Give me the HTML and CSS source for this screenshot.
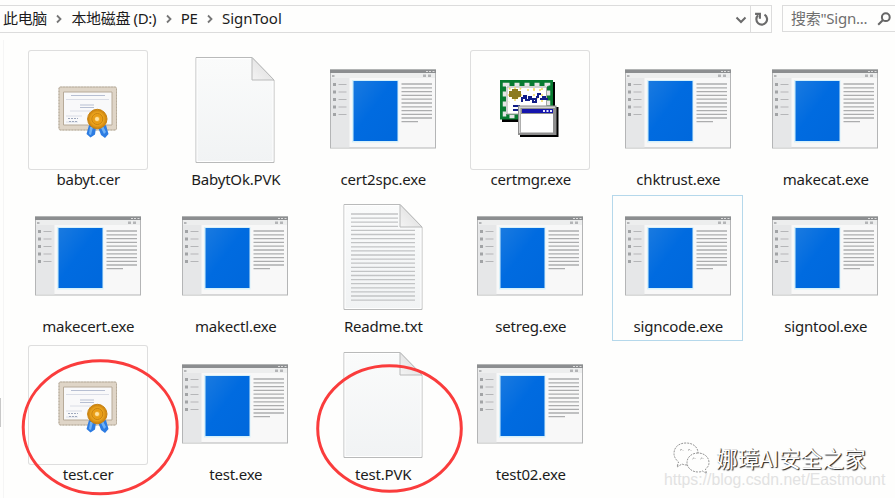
FILE: index.html
```html
<!DOCTYPE html>
<html lang="zh-CN">
<head>
<meta charset="utf-8">
<title>SignTool</title>
<link rel="stylesheet" href="styles.css">
</head>
<body>
<svg class="defs" aria-hidden="true">
  <defs>
    <linearGradient id="blue" x1="0" y1="0" x2="1" y2="1"><stop offset="0" stop-color="#1a7ae0"/><stop offset=".45" stop-color="#006be0"/><stop offset="1" stop-color="#0068dc"/></linearGradient>
    <linearGradient id="paper" x1="0" y1="0" x2="0" y2="1"><stop offset="0" stop-color="#fafbfb"/><stop offset="1" stop-color="#f1f3f4"/></linearGradient>
    <linearGradient id="fold" x1="0" y1="1" x2="1" y2="0"><stop offset="0" stop-color="#f4f4f4"/><stop offset="1" stop-color="#d9d9d9"/></linearGradient>
    <radialGradient id="gold"><stop offset="0" stop-color="#fbd26c"/><stop offset=".35" stop-color="#e79a12"/><stop offset=".6" stop-color="#efa920"/><stop offset="1" stop-color="#c97f0c"/></radialGradient>
    <symbol id="exe" viewBox="0 0 120 120">
      <rect x="7.5" y="20" width="105" height="78" fill="#f8f8f8" stroke="#b4b5b6"/>
      <path fill="#e6e7e8" d="M8 28h18.500v69.500H8z"/>
      <path fill="#edeeee" d="M8 23h104v5H8z"/>
      <path fill="#8c8e90" d="M7 19.500h106V23H7z"/>
      <path stroke="#ddd" d="M103 21.500h2M106 21.500h2M109.500 21.500h2"/>
      <path fill="#b4b5b7" d="M9 25h2.500v2H9zM100 24.500h3v2.500h-3zM105 24.500h3v2.500h-3z"/>
      <path fill="#d5f0fa" d="M29 30h46.500v62.500H29z"/>
      <path fill="url(#blue)" d="M30.500 31H74.500v60h-44z"/>
      <path stroke="#a2a4a6" stroke-width="3" stroke-dasharray="3 4.500" d="M11.500 33v35"/>
      <path stroke="#b5b6b8" stroke-width="1.200" d="M15.500 34.500h8M15.500 42h8M15.500 49.500h8M15.500 57h8M15.500 64.500h8"/>
      <path stroke="#acadae" stroke-width="1.300" d="M78.500 34h30.500M78.500 37.800h30.500M78.500 41.600h30.500M78.500 45.400h30.500M78.500 49.200h30.500M78.500 53h30.500M78.500 56.800h30.500M78.500 60.600h30.500M78.500 64.400h30.500M78.500 68h30.500M78.500 71.700h16.500"/>
    </symbol>
    <symbol id="file" viewBox="0 0 120 120">
      <path fill="url(#paper)" stroke="#b9baba" d="M21 7.500h56l22 22.500v82.500H21z"/>
      <path fill="none" stroke="#fff" d="M22 8.500h54M22 8v103.500h76V31"/>
      <path fill="url(#fold)" stroke="#b9baba" d="M77 7.500v22.500h22z"/>
    </symbol>
    <symbol id="txt" viewBox="0 0 120 120">
      <use href="#file"/>
      <path stroke="#c2c4c5" stroke-width="1.300" d="M28 17h47M28 21.100h47M28 25.200h47M28 29.300h47M28 33.400h64M28 37.500h64M28 41.600h64M28 45.700h64M28 49.800h64M28 53.900h64M28 58h64M28 62.100h64M28 66.200h64M28 70.300h64M28 74.400h64M28 78.500h64M28 82.600h64M28 86.700h64M28 90.800h64M28 94.900h64M28 99h64M28 103.100h64"/>
    </symbol>
    <symbol id="cer" viewBox="0 0 120 120">
      <rect x="31" y="37" width="57.500" height="43" rx="1.500" fill="#dfd5c7" stroke="#c2b7a6"/>
      <rect x="31" y="37" width="57.500" height="43" rx="1.500" fill="none" stroke="#b3a999" stroke-dasharray="1 2"/>
      <path fill="#f9f9fa" stroke="#b7aa98" d="M35.500 42h48.500v33H35.500z"/>
      <path stroke="#b7bfd2" d="M43 45.500h34M52 55h14M52 57.500h14"/>
      <path stroke="#dadde6" d="M38 49.500h43M42 61h30M38 66h16M38 72h12"/>
      <path stroke="#9fa9bd" stroke-dasharray="2 1" d="M40 68.500h10M41 71.500h8"/>
      <path fill="#2d7ce2" d="m61 75-2.500 9 4 3.500 4.500-3 1-7zM70 77l3 8 4 3 3.500-4-2.500-9z"/>
      <path fill="#70b2f5" d="m62 77-1 7 2 1 2-8zM73 78l3 6 2-2-3-6z"/>
      <circle cx="69.300" cy="69" r="9.700" fill="url(#gold)" stroke="#c98310"/>
      <circle cx="69.300" cy="69" r="5.500" fill="none" stroke="#c88110"/>
      <circle cx="69" cy="69" r="2" fill="#ffe2a0"/>
    </symbol>
    <symbol id="mgr" viewBox="0 0 120 120">
      <path fill="#000" d="M32 32h53v40H32z"/>
      <path fill="#087b31" d="M30 30h53v39.500H30z"/>
      <path fill="#fff" d="M36 36h41v28H36z"/>
      <path fill="none" stroke="#e5e5e5" stroke-width="3.500" stroke-dasharray="5 5" d="M34.500 34.500h44v32h-44z"/>
      <path fill="none" stroke="#a5a5a5" d="M37 37h39.500v27H37z"/>
      <path fill="none" stroke="#f4dc62" stroke-width="1.500" stroke-dasharray="2 4" d="m39 38 14 13M51 38 39 52M45 37v18M38 45h18M57 40h18M60 48h15M64 38v10M72 38v14"/>
      <path fill="#8b7a21" d="M42 39h6v2h3v6h-3v2h-6v-2h-3v-6h3z"/>
      <path fill="none" stroke="#111d87" stroke-width="2" d="M52 52v-4h2v-2h2v4h3v-3h2v3M63 49v3h3v-3zM66 47h2v-3h3M70 49h3v-2h2v2h3M43 56h7M43 60h7"/>
      <path fill="#000" d="M50 57h38.500v30H50z"/>
      <path fill="#8e8e8e" d="M48 55.500h38.500v29.500H48z"/>
      <path fill="#d1d1d1" d="M49 56.500h36v1.500H50.500v25H49z"/>
      <path fill="#fff" d="M51 64h32v18.500H51z"/>
      <path fill="#1515ae" d="M52 59h31v4H52z"/>
      <path stroke="#e8e8ff" stroke-width="2" stroke-dasharray="2 1.500" d="M73 61h10"/>
    </symbol>
  </defs>
</svg>

<header class="toolbar">
  <nav class="address">
    <span class="crumb">此电脑</span><svg class="chev" viewBox="0 0 8 10"><path d="m2 1.500 3.500 3.500L2 8.500"/></svg>
    <span class="crumb">本地磁盘 (D:)</span><svg class="chev" viewBox="0 0 8 10"><path d="m2 1.500 3.500 3.500L2 8.500"/></svg>
    <span class="crumb">PE</span><svg class="chev" viewBox="0 0 8 10"><path d="m2 1.500 3.500 3.500L2 8.500"/></svg>
    <span class="crumb leaf">SignTool</span>
    <svg class="drop" viewBox="0 0 12 8"><path d="m1.500 1.500 4.500 4.500 4.500-4.500"/></svg>
    <span class="refresh"><svg viewBox="0 0 14 14"><path d="M9.800 2.500a5 5 0 1 1-6 .6"/><path d="M1 1.800h4.500v4.500"/></svg></span>
  </nav>
  <div class="search"><span>搜索"Sign...</span><svg viewBox="0 0 14 14"><circle cx="8.800" cy="5.200" r="3.900"/><path d="M6 8 1.200 12.800"/></svg></div>
</header>

<main class="files">
  <div class="item"><svg class="icon framed"><use href="#cer"/></svg><span>babyt.cer</span></div>
  <div class="item"><svg class="icon"><use href="#file"/></svg><span>BabytOk.PVK</span></div>
  <div class="item"><svg class="icon"><use href="#exe"/></svg><span>cert2spc.exe</span></div>
  <div class="item"><svg class="icon framed"><use href="#mgr"/></svg><span>certmgr.exe</span></div>
  <div class="item"><svg class="icon"><use href="#exe"/></svg><span>chktrust.exe</span></div>
  <div class="item"><svg class="icon"><use href="#exe"/></svg><span>makecat.exe</span></div>
  <div class="item"><svg class="icon"><use href="#exe"/></svg><span>makecert.exe</span></div>
  <div class="item"><svg class="icon"><use href="#exe"/></svg><span>makectl.exe</span></div>
  <div class="item"><svg class="icon"><use href="#txt"/></svg><span>Readme.txt</span></div>
  <div class="item"><svg class="icon"><use href="#exe"/></svg><span>setreg.exe</span></div>
  <div class="item selected"><svg class="icon"><use href="#exe"/></svg><span>signcode.exe</span></div>
  <div class="item"><svg class="icon"><use href="#exe"/></svg><span>signtool.exe</span></div>
  <div class="item"><svg class="icon framed"><use href="#cer"/></svg><span>test.cer</span></div>
  <div class="item"><svg class="icon"><use href="#exe"/></svg><span>test.exe</span></div>
  <div class="item"><svg class="icon"><use href="#file"/></svg><span>test.PVK</span></div>
  <div class="item"><svg class="icon"><use href="#exe"/></svg><span>test02.exe</span></div>
</main>

<i class="splitter"></i>
<i class="thumb"></i>
<svg class="marks" viewBox="0 0 895 498">
  <ellipse cx="100.200" cy="427.300" rx="77" ry="66.500"/>
  <ellipse cx="389.500" cy="428.500" rx="71.800" ry="62.700"/>
</svg>
<div class="brand">
  <svg viewBox="0 0 38 34"><path d="M15 24q-3 0-5-1l-5 3 1.500-5Q2 17 2 12.500C2 6 7 2 14 2s12 4 12 10"/><path d="M26 12c-6 0-11 4-11 9.500S20 31 26 31q3 0 4.500-1l4 2.500-1-4.500q3.500-2.500 3.500-6.500c0-5.500-5-9.500-11-9.500z"/><path d="M8 9.500q1.500-2 3 0M16 9.500q1.500-2 3 0M20.500 18q1.500-2 3 0M28.500 18q1.500-2 3 0"/></svg>
  <span>娜璋AI安全之家</span>
</div>
<div class="url">https://blog.csdn.net/Eastmount</div>
</body>
</html>
```

FILE: styles.css
```css
* { box-sizing: border-box; }
body {
  margin: 0;
  width: 895px;
  height: 498px;
  position: relative;
  overflow: hidden;
  background: #fefefd;
  color: #1c1c1c;
  font-family: "Noto Sans", "Noto Sans CJK SC", sans-serif;
  font-size: 15px;
}
.defs { position: absolute; width: 0; height: 0; }
.toolbar { display: flex; gap: 10px; height: 48px; padding-top: 5px; }
.address {
  display: flex;
  align-items: center;
  flex: none;
  width: 772px;
  height: 28px;
  padding: 0 0 2px 3px;
  border: 1px solid #dcdcdc;
  border-left: 0;
}
.crumb { line-height: 24px; white-space: nowrap; letter-spacing: -.35px; }
.leaf { letter-spacing: 0; }
.chev { width: 8px; height: 10px; margin: 2px 8px 0 8.5px; }
.chev path { fill: none; stroke: #777; stroke-width: 1.8; }
.drop path { fill: none; stroke: #6b6b6b; stroke-width: 2; }
.drop { width: 12px; height: 8px; margin: 3px 3px 0 auto; }
.refresh {
  display: flex;
  align-items: center;
  justify-content: center;
  width: 21px;
  height: 26px;
  margin-bottom: -2px;
  padding-left: 1px;
  border-left: 1px solid #dcdcdc;
}
.refresh svg { width: 15px; height: 15px; }
.refresh path { fill: none; stroke: #6b6b6b; stroke-width: 2; }
.search {
  display: flex;
  align-items: center;
  flex: none;
  width: 120px;
  height: 27px;
  padding-left: 8px;
  border: 1px solid #dcdcdc;
  color: #6f6f6f;
  white-space: nowrap;
}
.search span { width: 86px; line-height: 24px; padding-bottom: 1px; letter-spacing: -.25px; }
.search svg { width: 14px; height: 14px; flex: none; }
.search circle, .search path { fill: none; stroke: #666; stroke-width: 2; }
.files {
  display: grid;
  grid-template-columns: repeat(6, 147.5px);
  grid-auto-rows: 147.3px;
  padding-left: 14px;
}
.item {
  display: flex;
  flex-direction: column;
  align-items: center;
  justify-self: center;
  width: 131px;
  height: 146px;
  padding-top: 1px;
  border: 1px solid transparent;
}
.selected { border-color: #b5d8eb; }
.icon { width: 120px; height: 120px; flex: none; }
.framed { border-radius: 3px; box-shadow: inset 0 0 0 1px #dedede; }
.item span { margin-left: 1px; line-height: 18px; letter-spacing: -.2px; white-space: nowrap; }
.splitter { position: absolute; left: 3px; top: 40px; bottom: 0; width: 1px; background: #f5f5f5; }
.thumb { position: absolute; left: 0; top: 398px; width: 1px; height: 29px; background: #c8c8c8; }
.marks { position: absolute; inset: 0; width: 895px; height: 498px; }
.marks ellipse { fill: none; stroke: #fa3c3c; stroke-width: 3; }
.brand {
  position: absolute;
  left: 672px;
  top: 441px;
  display: flex;
  align-items: center;
  gap: 6px;
  color: #fff;
  font-family: "Noto Sans CJK SC", sans-serif;
  font-size: 21.7px;
  line-height: 26px;
  white-space: nowrap;
  text-shadow: 1px 1px 1px #222, 1px 0 0 #888;
}
.brand svg { width: 38px; height: 34px; }
.brand path { fill: none; stroke: #888; stroke-width: .9; stroke-dasharray: 2 1; }
.url {
  position: absolute;
  left: 664px;
  top: 471px;
  color: #e2e2e2;
  font: 15.8px/18px "Liberation Sans", sans-serif;
  white-space: nowrap;
}
```
